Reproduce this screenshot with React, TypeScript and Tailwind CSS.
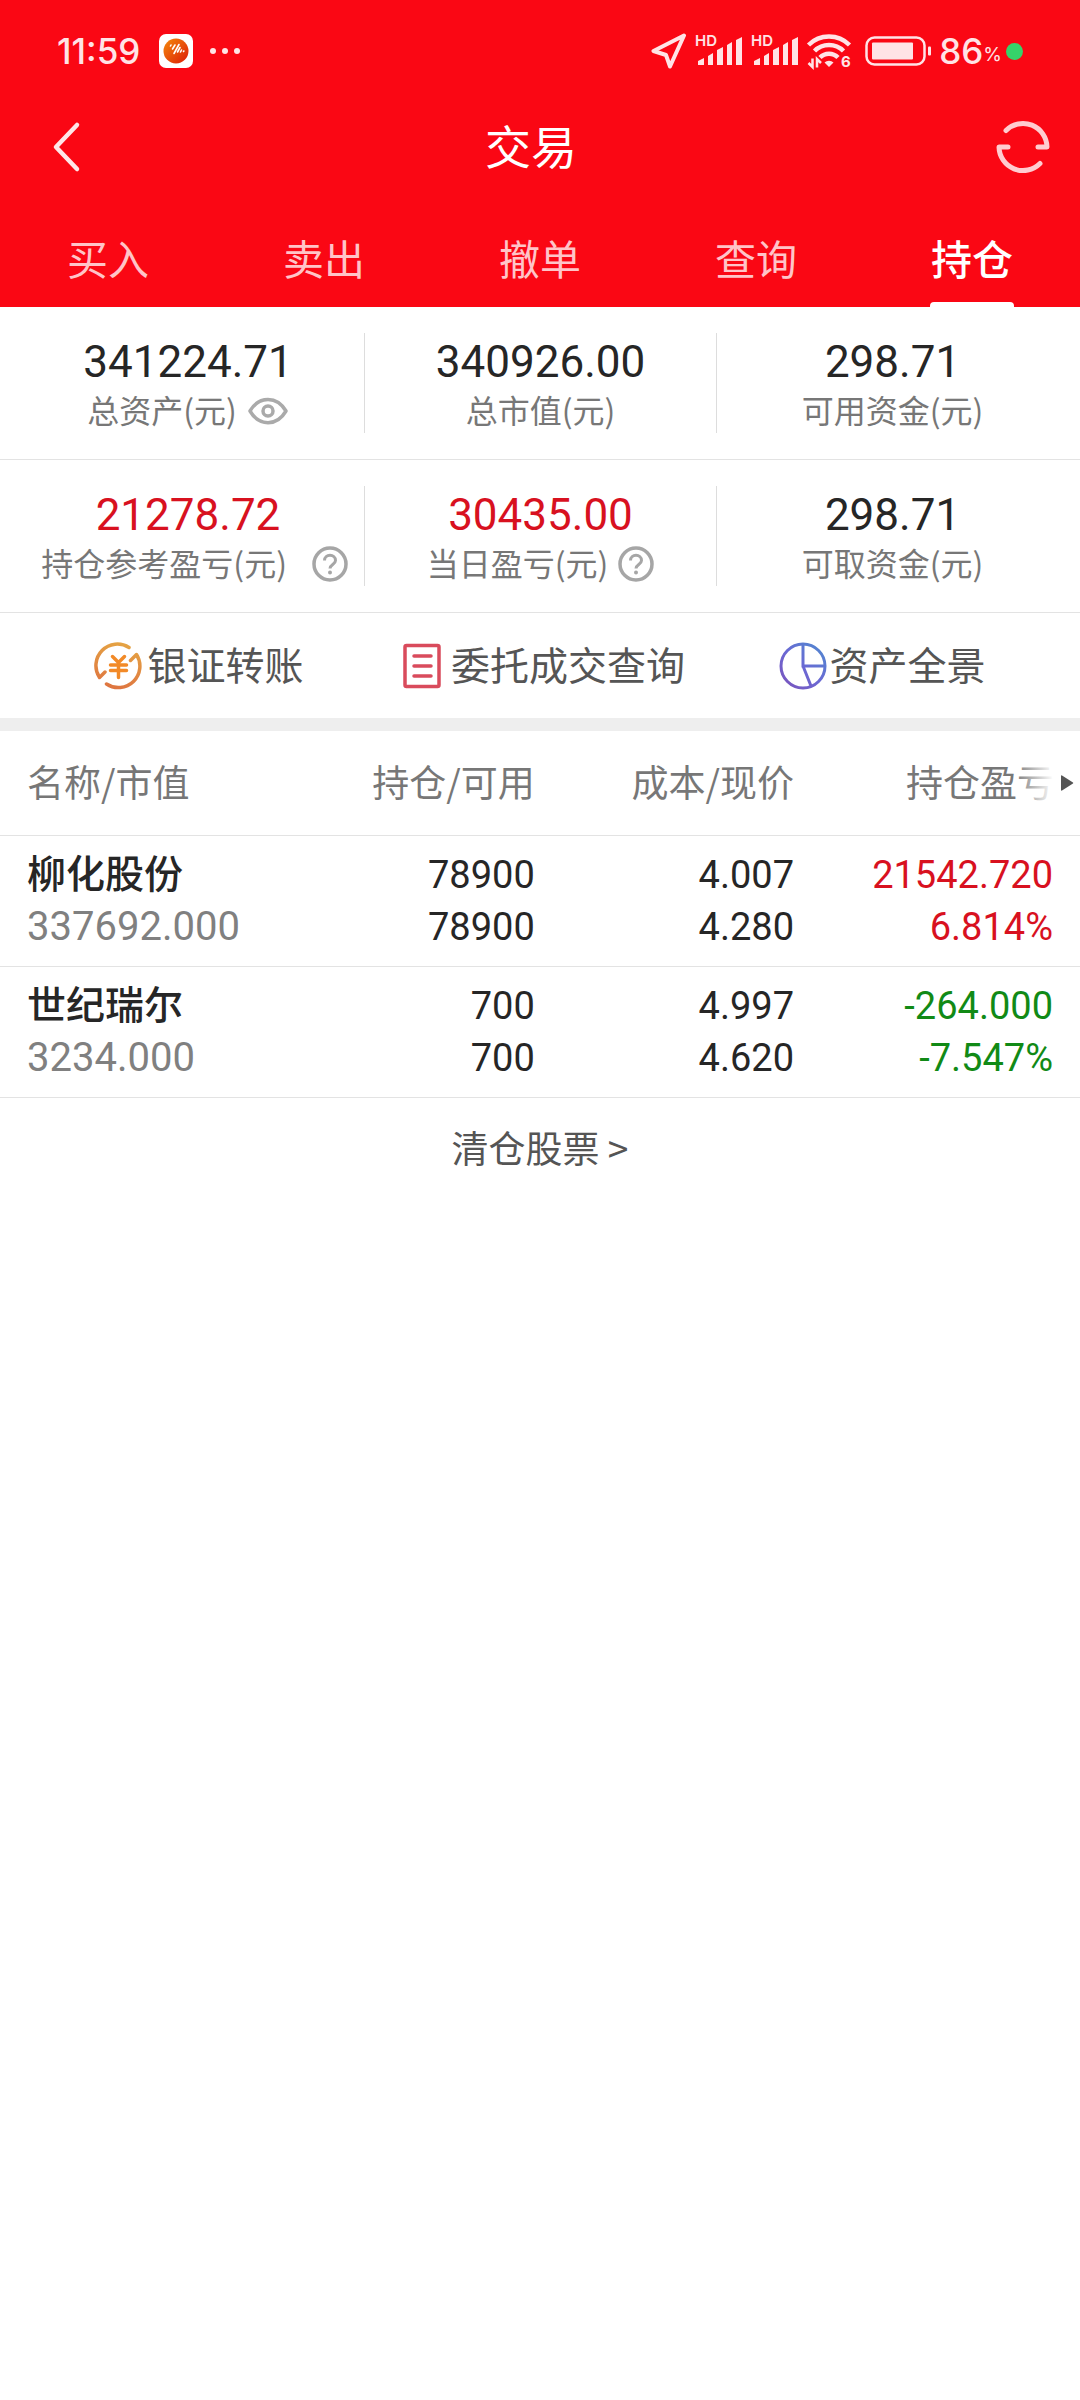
import { useState } from "react";

const tabs = ["买入", "卖出", "撤单", "查询", "持仓"];

const holdings = [
  { name: "柳化股份", value: "337692.000", qty: "78900", usable: "78900", cost: "4.007", price: "4.280", pnl: "21542.720", pct: "6.814%", up: true },
  { name: "世纪瑞尔", value: "3234.000", qty: "700", usable: "700", cost: "4.997", price: "4.620", pnl: "-264.000", pct: "-7.547%", up: false },
];

function Signal() {
  return (
    <svg className="overflow-visible" width="48" height="36" viewBox="0 0 48 36" fill="#ffe3e6">
      <text x="0" y="13" fontSize="15" fontWeight="600" fontFamily="Inter, sans-serif">HD</text>
      <path d="M3 32v-4l6-3v7zM13 32v-9l5-3v12zM22 32V17l6-3v18zM32 32V12l5-3v23zM41 32V7l6-3v28z" />
    </svg>
  );
}

function Wifi() {
  return (
    <svg className="overflow-visible" width="46" height="36" viewBox="0 0 46 36" fill="none" stroke="#ffe3e6" strokeWidth="4.500">
      <path d="M1.500 12a29 29 0 0 1 41 0M7.500 18a20.500 20.500 0 0 1 29 0M13 24.500a12.500 12.500 0 0 1 18 0" />
      <path d="M22 34l-4.500-4.500a6.500 6.500 0 0 1 9 0z" fill="#ffe3e6" stroke="none" />
      <path d="M5.500 25.500v8.500l-4-4M10 34.500V26l4 4" strokeWidth="2.500" />
      <text x="34" y="34" fontSize="15" fontWeight="700" stroke="none" fill="#ffe3e6" fontFamily="Inter, sans-serif">6</text>
    </svg>
  );
}

function StatusBar() {
  return (
    <div className="flex h-[102px] items-center justify-between px-[57px] font-[Inter,sans-serif] text-[#ffe3e6]">
      <div className="flex items-center">
        <span className="w-[102px] text-[35px] leading-[44px] font-medium">11:59</span>
        <svg width="34" height="34" viewBox="0 0 34 34">
          <defs>
            <linearGradient id="app" x1="0" y1="0" x2="1" y2="1">
              <stop offset="0" stopColor="#f58a0c" />
              <stop offset="1" stopColor="#dc1b08" />
            </linearGradient>
          </defs>
          <rect width="34" height="34" rx="7" fill="#fff" />
          <circle cx="17" cy="17" r="12.500" fill="url(#app)" />
          <path d="M11.500 12l.5-1M13.500 15l2.500-4M15 19.500l5-9M18.500 18l2.500-4.500M21.500 18l1-2M24.500 17.500l.3-.5" stroke="#fff" strokeWidth="1.600" strokeLinecap="round" />
        </svg>
        <svg className="ml-4" width="32" height="8" viewBox="0 0 32 8" fill="#ffe3e6">
          <circle cx="4" cy="4" r="3" />
          <circle cx="16" cy="4" r="3" />
          <circle cx="28" cy="4" r="3" />
        </svg>
      </div>
      <div className="flex items-center">
        <svg width="36" height="36" viewBox="0 0 36 36" fill="none" stroke="#ffe3e6" strokeWidth="4" strokeLinejoin="round">
          <path d="M33 2.500L2.500 18l12.500 4 4 11.500z" />
        </svg>
        <span className="ml-2 flex gap-2"><Signal /><Signal /></span>
        <span className="ml-2"><Wifi /></span>
        <svg className="ml-3" width="68" height="30" viewBox="0 0 68 30" fill="none">
          <rect x="1.500" y="1.500" width="58" height="27" rx="8" stroke="#ffe3e6" strokeWidth="2.500" />
          <rect x="7" y="6.500" width="41" height="17" rx="1" fill="#ffe3e6" />
          <rect x="63" y="10.500" width="3" height="9" rx="1" fill="#ffe3e6" />
        </svg>
        <span className="ml-[6px] text-[35px] leading-[44px] font-medium">86</span>
        <span className="mt-2 text-[19px] leading-[24px]">%</span>
        <span className="ml-1 size-[17px] rounded-full bg-[#36d36a]" />
      </div>
    </div>
  );
}

function Help() {
  return (
    <svg width="36" height="36" viewBox="0 0 36 36" fill="none" stroke="#a6a6a6" strokeWidth="3.500">
      <circle cx="18" cy="18" r="16" />
      <path d="M12.500 14.500c0-7 11-7 11 0 0 4-5.500 4-5.500 8" strokeWidth="3" />
      <circle cx="18" cy="26.500" r="2" fill="#a6a6a6" stroke="none" />
    </svg>
  );
}

function Stat({ value, children, red, divided, wide }: any) {
  return (
    <div className={"flex h-[100px] flex-col justify-center gap-[2px] " + (divided ? "border-l border-[#ddd]" : "")}>
      <div className={"text-center font-[Roboto,sans-serif] text-[44px] leading-[50px] " + (red ? "text-[#d8111f]" : "text-[#262626]")}>{value}</div>
      <div className={"flex items-center text-[32px] leading-[40px] whitespace-nowrap text-[#777] " + (wide ? "justify-end gap-[25px] pr-4" : "justify-center gap-[10px]")}>
        {children}
      </div>
    </div>
  );
}

export default function App() {
  const [tab, setTab] = useState("持仓");
  const [hidden, setHidden] = useState(false);
  const show = (v: string) => (hidden ? "****" : v);

  return (
    <main className="min-h-screen bg-white font-['Noto_Sans_CJK_SC',sans-serif]">
      <header className="bg-[#fa0714]">
        <StatusBar />
        <div className="flex h-[110px] items-center pb-5 text-white">
          <button aria-label="返回" className="flex w-[84px] justify-end">
            <svg width="32" height="52" viewBox="0 0 32 52" fill="none" stroke="#fff" strokeOpacity=".9" strokeWidth="4.500" strokeLinecap="round" strokeLinejoin="round">
              <path d="M25 4L4 26l21 22" />
            </svg>
          </button>
          <h1 className="flex-1 pb-[6px] text-center text-[46px] leading-[60px]">交易</h1>
          <button aria-label="刷新" className="w-[102px] pl-[17px]">
            <svg width="56" height="56" viewBox="0 0 56 56" fill="none" stroke="#ffccd0" strokeWidth="5" strokeLinecap="round" strokeLinejoin="round">
              <path d="M11 11.500a24 24 0 0 1 41 16.500h-9M45 44.500a24 24 0 0 1-41-16.500h9" />
            </svg>
          </button>
        </div>
        <nav className="grid grid-cols-5">
          {tabs.map(t => (
            <button key={t} onClick={() => setTab(t)} className="flex h-[95px] flex-col items-center justify-between pt-[15px]">
              <span className={"text-[41px] leading-[60px] " + (t === tab ? "font-medium text-white" : "text-[#ffc4c8]")}>{t}</span>
              {t === tab && <span className="h-[5px] w-[84px] rounded-t-sm bg-white" />}
            </button>
          ))}
        </nav>
      </header>

      <section className="grid grid-cols-3 border-b border-[#e3e3e3] px-3 py-[26px]">
        <Stat value={show("341224.71")}>
          总资产(元)
          <button aria-label="显示或隐藏金额" onClick={() => setHidden(!hidden)} className="pt-[3px]">
            <svg width="42" height="28" viewBox="0 0 42 28" fill="none" stroke="#aaa" strokeWidth="3.500" strokeLinejoin="round">
              <path d="M3 14C12-1.500 30-1.500 39 14 30 29.500 12 29.500 3 14z" />
              <circle cx="21" cy="14" r="5" />
            </svg>
          </button>
        </Stat>
        <Stat value={show("340926.00")} divided>总市值(元)</Stat>
        <Stat value={show("298.71")} divided>可用资金(元)</Stat>
      </section>
      <section className="grid grid-cols-3 border-b border-[#e3e3e3] px-3 py-[26px]">
        <Stat value={show("21278.72")} red wide>
          持仓参考盈亏(元)
          <button aria-label="持仓参考盈亏说明" className="pt-[3px]"><Help /></button>
        </Stat>
        <Stat value={show("30435.00")} red divided>
          当日盈亏(元)
          <button aria-label="当日盈亏说明" className="pt-[3px]"><Help /></button>
        </Stat>
        <Stat value={show("298.71")} divided>可取资金(元)</Stat>
      </section>

      <section className="flex h-[105px] items-center justify-evenly text-[39px] leading-[48px] text-[#555]">
        <a href="#transfer" className="flex items-center gap-[5px]">
          <svg width="48" height="48" viewBox="0 0 48 48" fill="none" stroke="url(#gold)" strokeWidth="3.500" strokeLinecap="round" strokeLinejoin="round">
            <defs>
              <linearGradient id="gold" gradientUnits="userSpaceOnUse" x1="30" y1="0" x2="18" y2="48">
                <stop offset="0" stopColor="#e5a544" />
                <stop offset="1" stopColor="#de7340" />
              </linearGradient>
            </defs>
            <path d="M35 5.500A21.500 21.500 0 0 0 5.500 35.500l5.500-5.500M12.500 42A21.500 21.500 0 0 0 42.500 12.500l-6 6" />
            <path d="M18.500 14.500l6 6 6-6M24.500 20.500v15M16.500 23h16M16.500 28.500h16" stroke="#f28a28" />
          </svg>
          <span className="pb-[5px]">银证转账</span>
        </a>
        <a href="#orders" className="flex items-center gap-[5px]">
          <svg width="48" height="48" viewBox="0 0 48 48" fill="none" stroke="#d94b5c" strokeWidth="3.500" strokeLinecap="round">
            <rect x="7" y="3.500" width="34" height="41" rx="1.500" />
            <path d="M16 14h17M16 24h17M16 34h17" />
          </svg>
          <span className="pb-[5px]">委托成交查询</span>
        </a>
        <a href="#assets" className="flex items-center gap-[2px]">
          <svg width="48" height="48" viewBox="0 0 48 48" fill="none" stroke="url(#violet)" strokeWidth="3">
            <defs>
              <linearGradient id="violet" gradientUnits="userSpaceOnUse" x1="8" y1="44" x2="42" y2="6">
                <stop offset="0" stopColor="#7857c0" />
                <stop offset=".5" stopColor="#6a69d4" />
                <stop offset="1" stopColor="#5484d0" />
              </linearGradient>
            </defs>
            <circle cx="24" cy="24" r="22" />
            <path d="M24 2v22h22M24 24l8 20" />
          </svg>
          <span className="pb-[5px]">资产全景</span>
        </a>
      </section>
      <div className="h-[13px] bg-[#eee]" />

      <table className="w-full table-fixed">
        <colgroup>
          <col />
          <col className="w-[24%]" />
          <col className="w-[24%]" />
          <col className="w-[286px]" />
        </colgroup>
        <thead>
          <tr className="h-[104px] border-b border-[#e3e3e3] text-right text-[37px] leading-[48px] whitespace-nowrap text-[#777]">
            <th className="pb-[3px] pl-[27px] text-left font-normal">名称/市值</th>
            <th className="pb-[3px] font-normal">持仓/可用</th>
            <th className="pb-[3px] font-normal">成本/现价</th>
            <th className="relative pr-[26px] pb-[3px] font-normal">
              持仓盈亏
              <span className="absolute inset-y-0 right-0 flex w-[66px] items-center justify-end bg-linear-to-r from-transparent to-white to-60% pr-[6px]">
                <svg width="14" height="18" viewBox="0 0 14 18" fill="#555">
                  <path d="M1 2q0-1 1-.5l11 7q.5.5 0 1l-11 7q-1 .5-1-.5z" />
                </svg>
              </span>
            </th>
          </tr>
        </thead>
        <tbody>
          {holdings.map(h => (
            <tr key={h.name} className="h-[131px] border-b border-[#e3e3e3] text-right font-[Roboto,'Noto_Sans_CJK_SC',sans-serif] text-[38px] leading-[52px] text-[#262626]">
              <td className="pl-[27px] text-left">
                <div className="text-[39px] font-medium">{h.name}</div>
                <div className="text-[40px] text-[#808080]">{h.value}</div>
              </td>
              <td><div>{h.qty}</div><div>{h.usable}</div></td>
              <td><div>{h.cost}</div><div>{h.price}</div></td>
              <td className={"pr-[27px] " + (h.up ? "text-[#d8111f]" : "text-[#118a16]")}>
                <div>{h.pnl}</div>
                <div>{h.pct}</div>
              </td>
            </tr>
          ))}
        </tbody>
      </table>

      <a href="#closed" className="block text-center text-[37px] leading-[98px] text-[#555]">清仓股票 &gt;</a>
    </main>
  );
}
